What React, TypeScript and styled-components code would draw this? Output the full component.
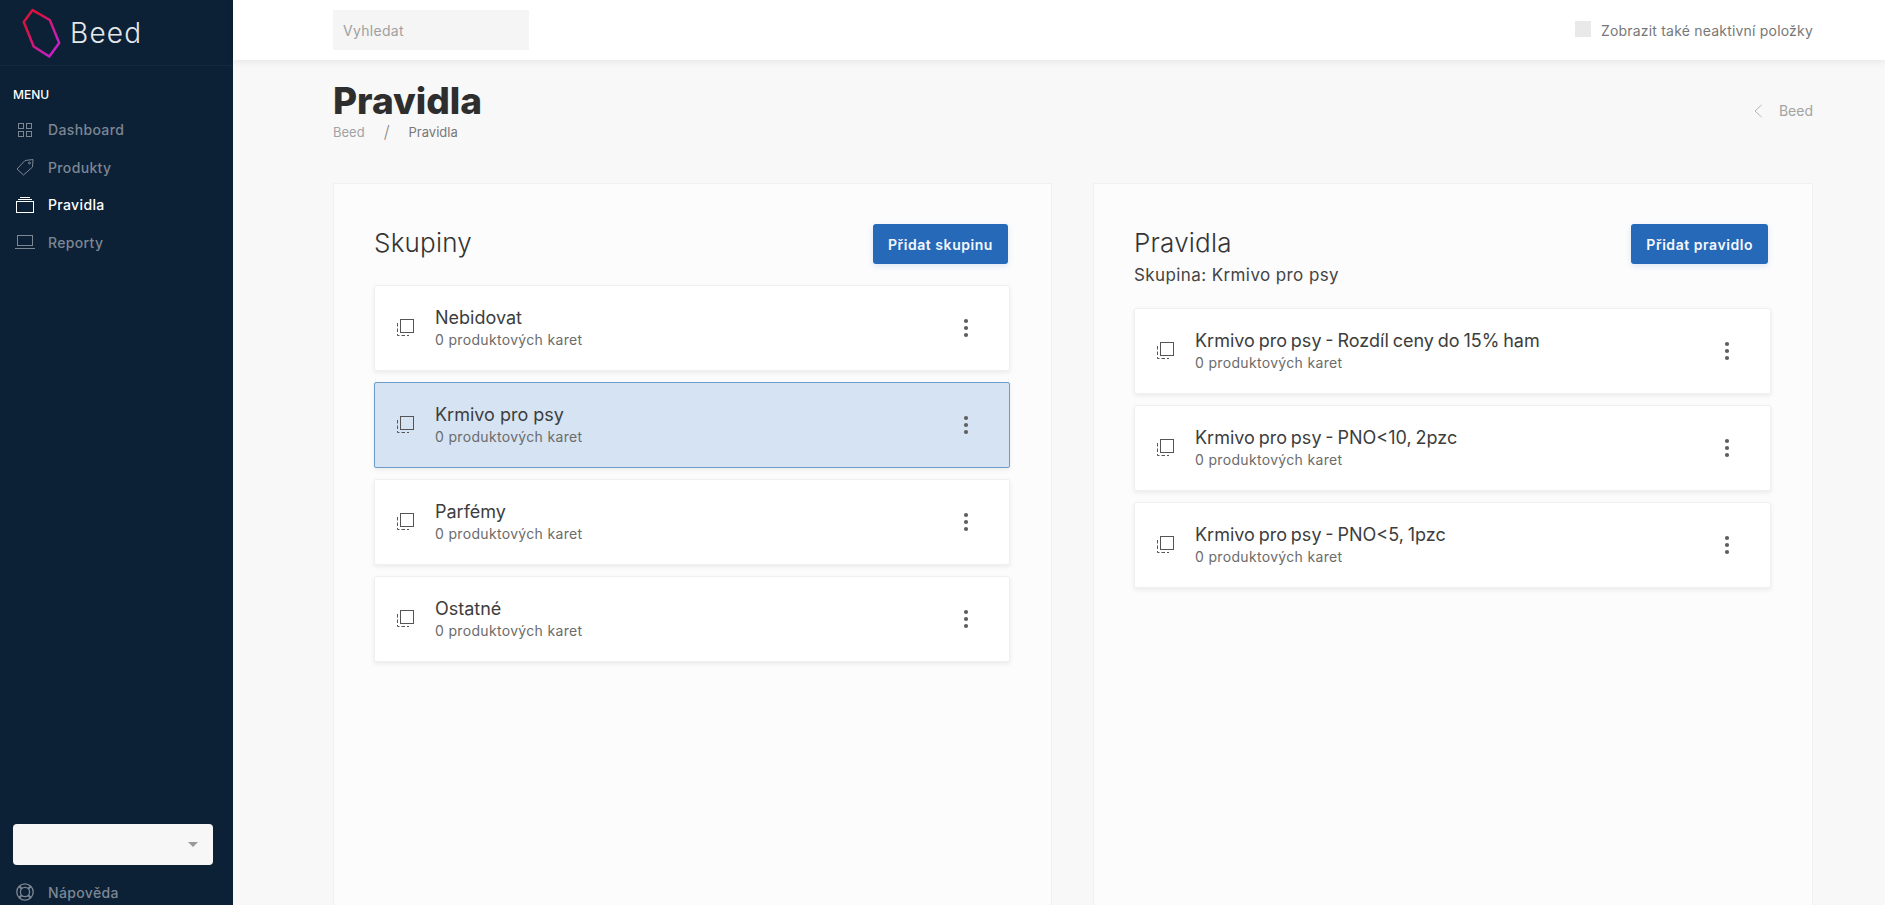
import styled, { createGlobalStyle } from 'styled-components';

const GlobalStyle = createGlobalStyle`
  html, body {
    margin: 0;
    padding: 0;
    height: 100%;
    overflow: hidden;
    background: #f8f8f8;
    font-family: Inter, "Open Sans", sans-serif;
    color: #343434;
  }
  * { box-sizing: border-box; }
`;

const Shell = styled.div`
  display: flex;
  width: 1885px;
  height: 905px;
  overflow: hidden;
`;

const Sidebar = styled.aside`
  display: flex;
  flex-direction: column;
  flex: 0 0 233px;
  background: #0c2136;
`;

const Brand = styled.div`
  display: flex;
  align-items: center;
  gap: 8px;
  height: 66px;
  padding: 0 0 0 22px;
  border-bottom: 1px solid #15293e;
`;

const BrandName = styled.span`
  font-size: 28px;
  font-weight: 300;
  letter-spacing: 1.2px;
  color: #e4e7ea;
`;

const MenuLabel = styled.div`
  margin: 21px 0 8px 13px;
  font-size: 12px;
  font-weight: 500;
  line-height: 16px;
  color: #fff;
`;

const NavItem = styled.div<{ $active?: boolean }>`
  display: flex;
  align-items: center;
  height: 37.5px;
  padding-left: 14px;
  font-size: 14px;
  font-weight: 500;
  letter-spacing: 0.35px;
  color: ${(p) => (p.$active ? '#ffffff' : '#7d8693')};
`;

const NavIcon = styled.span`
  display: flex;
  justify-content: center;
  flex: 0 0 22px;
  margin-right: 12px;
`;

const SidebarBottom = styled.div`
  margin-top: auto;
  margin-bottom: -6px;
`;

const OrgSelect = styled.div`
  display: flex;
  align-items: center;
  justify-content: flex-end;
  width: 200px;
  height: 41px;
  margin: 0 0 9px 13px;
  padding-right: 15px;
  border-radius: 4px;
  background: #f7f7f7;
`;

const Caret = styled.span`
  width: 0;
  height: 0;
  border-left: 5px solid transparent;
  border-right: 5px solid transparent;
  border-top: 5px solid #999;
`;

const Main = styled.main`
  display: flex;
  flex-direction: column;
  flex: 1;
  min-width: 0;
`;

const Topbar = styled.header`
  display: flex;
  align-items: center;
  justify-content: space-between;
  flex: 0 0 60px;
  padding: 0 72px 0 100px;
  background: #fff;
  box-shadow: 0 1px 8px rgba(0, 0, 0, 0.09);
`;

const SearchBox = styled.div`
  display: flex;
  align-items: center;
  width: 196px;
  height: 40px;
  padding-left: 10px;
  background: #f5f5f5;
  font-size: 14px;
  letter-spacing: 0.3px;
  color: #a0a0a0;
`;

const InactiveToggle = styled.label`
  display: flex;
  align-items: center;
  gap: 10px;
  font-size: 14px;
  letter-spacing: 0.2px;
  color: #777;
`;

const Checkbox = styled.span`
  width: 16px;
  height: 16px;
  margin-top: -2px;
  background: #e9e9e9;
`;

const Content = styled.div`
  display: flex;
  flex-direction: column;
  flex: 1;
  min-height: 0;
  padding: 20px 72px 0 100px;
`;

const PageHead = styled.div`
  display: flex;
  align-items: flex-start;
  justify-content: space-between;
  height: 103px;
`;

const PageTitle = styled.h1`
  margin: 1px 0 0;
  font-size: 37px;
  line-height: 40px;
  font-weight: 800;
  color: #2e2e2e;
`;

const Crumbs = styled.div`
  display: flex;
  align-items: center;
  gap: 19px;
  margin-top: 1px;
  font-size: 13px;
  line-height: 20px;
  color: #a3a3a3;
`;

const CrumbSlash = styled.span`
  font-size: 17px;
  font-weight: 300;
  color: #888;
`;

const CrumbCurrent = styled.span`
  color: #777;
`;

const BackLink = styled.div`
  display: flex;
  align-items: center;
  gap: 16px;
  margin-top: 22px;
  font-size: 14px;
  color: #a3a3a3;
`;

const Columns = styled.div`
  display: grid;
  grid-template-columns: 719px 720px;
  gap: 41px;
  flex: 1;
  min-height: 0;
`;

const Panel = styled.section`
  padding: 40px 40px 0;
  background: #fcfcfd;
  border: 1px solid #f1f1f2;
  border-bottom: 0;
`;

const PanelHead = styled.div`
  display: flex;
  align-items: flex-start;
  justify-content: space-between;
  margin-bottom: 21px;
`;

const PanelTitle = styled.h2`
  margin: -1px 0 1px;
  font-size: 26px;
  line-height: 40px;
  font-weight: 300;
  letter-spacing: 0.2px;
  color: #343434;
`;

const PanelSubtitle = styled.div`
  margin: 1px 0;
  font-size: 17px;
  line-height: 22px;
  letter-spacing: 0.4px;
  color: #444;
`;

const AddButton = styled.button<{ $inset: number }>`
  height: 40px;
  margin-right: ${(p) => p.$inset}px;
  padding: 0 15px;
  border: 0;
  border-radius: 3px;
  background: #2669b9;
  box-shadow: 0 2px 6px rgba(38, 105, 185, 0.15);
  font-family: inherit;
  font-size: 14px;
  font-weight: 600;
  letter-spacing: 0.55px;
  color: #f4f8fc;
`;

const ItemList = styled.div`
  display: flex;
  flex-direction: column;
  gap: 11px;
  margin-right: 1px;
`;

const Item = styled.div<{ $selected?: boolean }>`
  display: flex;
  align-items: center;
  height: 86px;
  padding: 0 40px 0 21px;
  border: 1px solid ${(p) => (p.$selected ? '#6b9dcc' : '#f0f0f0')};
  border-radius: 2px;
  background: ${(p) => (p.$selected ? '#d5e3f3' : '#ffffff')};
  box-shadow: 0 2px 5px rgba(0, 0, 0, 0.07);
`;

const ItemBody = styled.div`
  flex: 1;
  margin-left: 19px;
`;

const ItemName = styled.div<{ $tight?: boolean }>`
  font-size: 18px;
  line-height: 24px;
  word-spacing: ${(p) => (p.$tight ? '-1.2px' : '0')};
  color: #3d3d3d;
`;

const ItemMeta = styled.div`
  font-size: 14px;
  line-height: 20px;
  letter-spacing: 0.33px;
  color: #6b6b6b;
`;

const Logo = () => (
  <svg width="40" height="50" viewBox="24 8 38 48" fill="none">
    <defs>
      <linearGradient id="beedLogo" x1="0" y1="0" x2="1" y2="1">
        <stop offset="0.25" stopColor="#d9123f" />
        <stop offset="0.8" stopColor="#c91fc0" />
      </linearGradient>
    </defs>
    <path
      d="M34 10 50.5 19.5 59.5 41.5 50 54.5 35 45 25.5 21.5Z"
      stroke="url(#beedLogo)"
      strokeWidth="2.4"
      strokeLinejoin="round"
    />
  </svg>
);

const DashboardIcon = () => (
  <svg width="16" height="16" viewBox="0 0 16 16" fill="none" stroke="currentColor">
    <rect x="1.5" y="1.5" width="5" height="5" />
    <rect x="9.5" y="1.5" width="5" height="5" />
    <rect x="1.5" y="9.5" width="5" height="5" />
    <rect x="9.5" y="9.5" width="5" height="5" />
  </svg>
);

const TagIcon = () => (
  <svg width="20" height="18" viewBox="0 0 20 18" fill="none" stroke="currentColor">
    <path d="M18 1.5 10 2.5 2 11 8.5 17 17.5 9Z" strokeLinejoin="round" />
    <circle cx="14.5" cy="5" r="1" />
  </svg>
);

const StackIcon = () => (
  <svg width="20" height="18" viewBox="0 0 20 18" fill="none" stroke="currentColor">
    <rect x="1.5" y="5.5" width="17" height="11" />
    <path d="M3 3.5h14M5 1.5h10" />
  </svg>
);

const LaptopIcon = () => (
  <svg width="22" height="16" viewBox="0 0 22 16" fill="none" stroke="currentColor">
    <rect x="3.5" y="1.5" width="15" height="10" />
    <path d="M1 14.5h20" />
  </svg>
);

const HelpIcon = () => (
  <svg width="20" height="20" viewBox="0 0 20 20" fill="none" stroke="currentColor" strokeWidth="1.3">
    <circle cx="10" cy="10" r="8.2" />
    <circle cx="10" cy="10" r="4.6" />
    <path d="M4.2 4.2 6.8 6.8M15.8 4.2 13.2 6.8M4.2 15.8 6.8 13.2M15.8 15.8 13.2 13.2" strokeWidth="2" />
  </svg>
);

const CopyIcon = () => (
  <svg width="20" height="20" viewBox="0 0 20 20" fill="none" stroke="#555" style={{ flexShrink: 0 }}>
    <rect x="4.5" y="1.5" width="13" height="13" />
    <path d="M1.5 5v12.5H13" strokeDasharray="3.5 2" />
  </svg>
);

const KebabIcon = () => (
  <svg width="6" height="20" viewBox="0 0 6 20" fill="#5f5f5f" style={{ flexShrink: 0 }}>
    <circle cx="3" cy="3" r="2.1" />
    <circle cx="3" cy="10" r="2.1" />
    <circle cx="3" cy="17" r="2.1" />
  </svg>
);

const BackIcon = () => (
  <svg width="10" height="14" viewBox="0 0 10 14" fill="none" stroke="#b5b5b5">
    <path d="M8.5 1 2 7l6.5 6" />
  </svg>
);

const groups = ['Nebidovat', 'Krmivo pro psy', 'Parfémy', 'Ostatné'];
const rules = [
  'Krmivo pro psy - Rozdíl ceny do 15% ham',
  'Krmivo pro psy - PNO<10, 2pzc',
  'Krmivo pro psy - PNO<5, 1pzc',
];

type RowProps = {
  name: string;
  selected?: boolean;
  tight?: boolean;
};

const Row = ({ name, selected, tight }: RowProps) => (
  <Item $selected={selected}>
    <CopyIcon />
    <ItemBody>
      <ItemName $tight={tight}>{name}</ItemName>
      <ItemMeta>0 produktových karet</ItemMeta>
    </ItemBody>
    <KebabIcon />
  </Item>
);

const App = () => {
  return (
    <Shell>
      <GlobalStyle />
      <Sidebar>
        <Brand>
          <Logo />
          <BrandName>Beed</BrandName>
        </Brand>
        <MenuLabel>MENU</MenuLabel>
        <NavItem>
          <NavIcon><DashboardIcon /></NavIcon>
          Dashboard
        </NavItem>
        <NavItem>
          <NavIcon><TagIcon /></NavIcon>
          Produkty
        </NavItem>
        <NavItem $active>
          <NavIcon><StackIcon /></NavIcon>
          Pravidla
        </NavItem>
        <NavItem>
          <NavIcon><LaptopIcon /></NavIcon>
          Reporty
        </NavItem>
        <SidebarBottom>
          <OrgSelect>
            <Caret />
          </OrgSelect>
          <NavItem>
            <NavIcon><HelpIcon /></NavIcon>
            Nápověda
          </NavItem>
        </SidebarBottom>
      </Sidebar>
      <Main>
        <Topbar>
          <SearchBox>Vyhledat</SearchBox>
          <InactiveToggle>
            <Checkbox />
            Zobrazit také neaktivní položky
          </InactiveToggle>
        </Topbar>
        <Content>
          <PageHead>
            <div>
              <PageTitle>Pravidla</PageTitle>
              <Crumbs>
                <span>Beed</span>
                <CrumbSlash>/</CrumbSlash>
                <CrumbCurrent>Pravidla</CrumbCurrent>
              </Crumbs>
            </div>
            <BackLink>
              <BackIcon />
              Beed
            </BackLink>
          </PageHead>
          <Columns>
            <Panel>
              <PanelHead>
                <PanelTitle>Skupiny</PanelTitle>
                <AddButton $inset={3}>Přidat skupinu</AddButton>
              </PanelHead>
              <ItemList>
                {groups.map((g) => (
                  <Row key={g} name={g} selected={g === 'Krmivo pro psy'} />
                ))}
              </ItemList>
            </Panel>
            <Panel>
              <PanelHead>
                <div>
                  <PanelTitle>Pravidla</PanelTitle>
                  <PanelSubtitle>Skupina: Krmivo pro psy</PanelSubtitle>
                </div>
                <AddButton $inset={4}>Přidat pravidlo</AddButton>
              </PanelHead>
              <ItemList>
                {rules.map((r) => (
                  <Row key={r} name={r} tight />
                ))}
              </ItemList>
            </Panel>
          </Columns>
        </Content>
      </Main>
    </Shell>
  );
};

export default App;
